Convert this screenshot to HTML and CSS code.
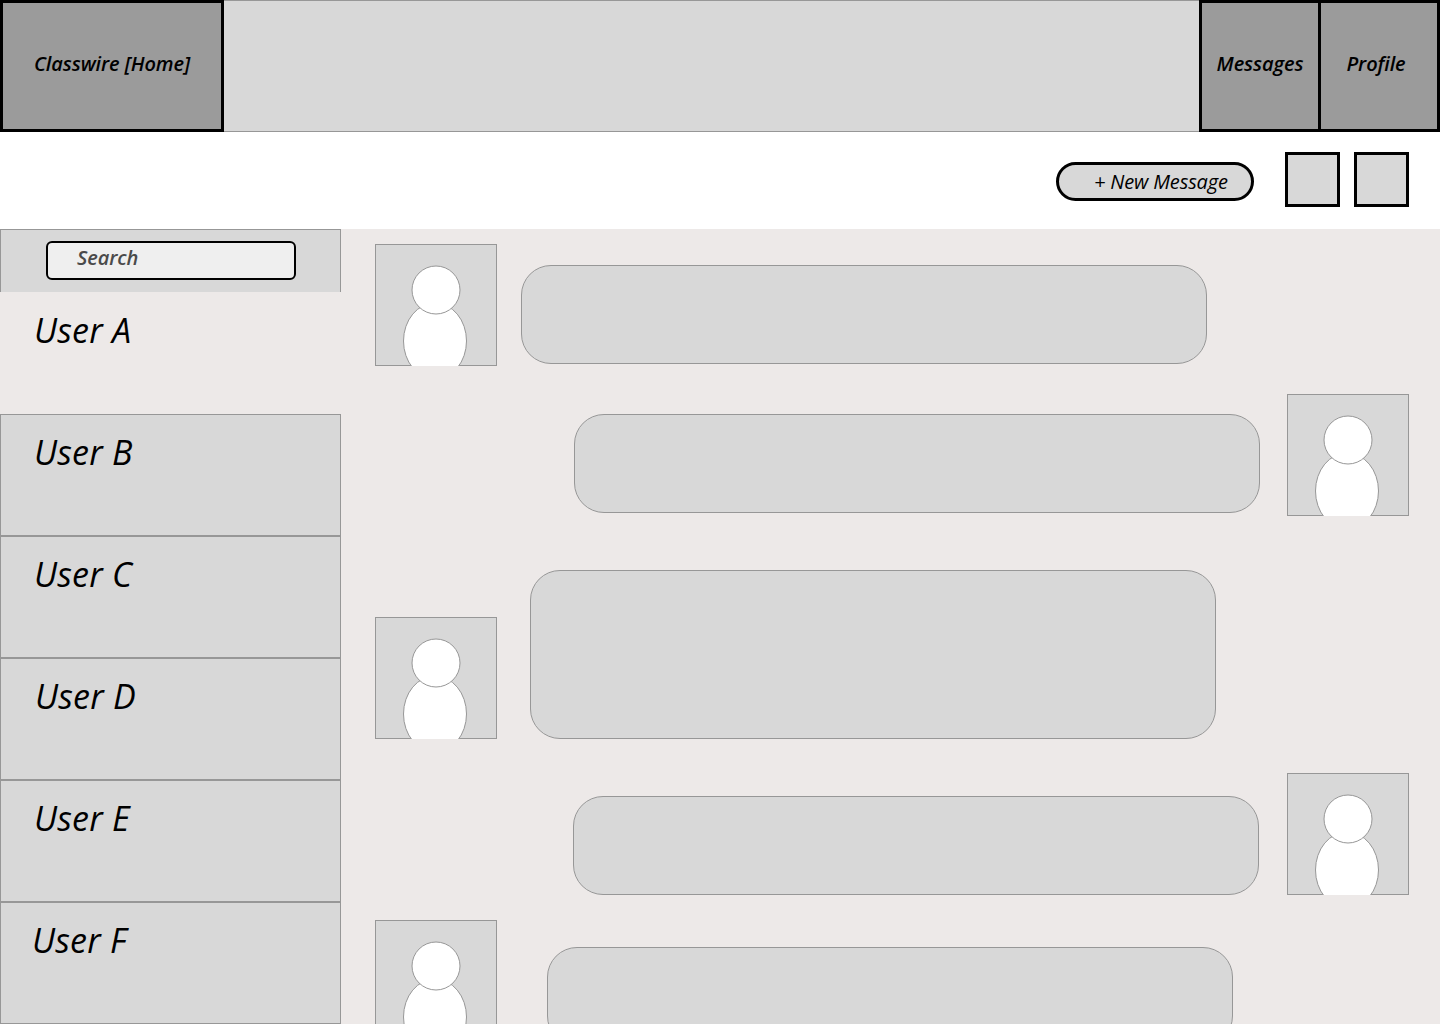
FILE: index.html
```html
<!DOCTYPE html>
<html lang="en">
<head>
<meta charset="utf-8">
<title>Classwire Messages</title>
<link rel="stylesheet" href="styles.css">
</head>
<body>
<svg class="defs" width="0" height="0" aria-hidden="true">
  <symbol id="person" viewBox="0 0 122 122">
    <ellipse cx="60" cy="97" rx="31.5" ry="38" fill="#fff" stroke="#979797"/>
    <circle cx="61" cy="46" r="24" fill="#fff" stroke="#979797"/>
  </symbol>
</svg>
<header class="topbar">
  <a class="nav-btn nav-home">Classwire [Home]</a>
  <div class="nav-spacer"></div>
  <a class="nav-btn nav-messages">Messages</a>
  <a class="nav-btn nav-profile">Profile</a>
</header>
<div class="toolbar">
  <button class="new-message">+ New Message</button>
  <div class="square"></div>
  <div class="square"></div>
</div>
<main class="content">
  <aside class="sidebar">
    <div class="search-bar"><div class="search-box">Search</div></div>
    <div class="user user-active">User A</div>
    <div class="user">User B</div>
    <div class="user">User C</div>
    <div class="user user-d">User D</div>
    <div class="user">User E</div>
    <div class="user user-f">User F</div>
  </aside>
  <section class="chat">
    <div class="msg msg-1">
      <div class="avatar"><svg><use href="#person"/></svg></div>
      <div class="bubble"></div>
    </div>
    <div class="msg msg-out msg-2">
      <div class="bubble"></div>
      <div class="avatar"><svg><use href="#person"/></svg></div>
    </div>
    <div class="msg msg-3">
      <div class="avatar"><svg><use href="#person"/></svg></div>
      <div class="bubble bubble-tall"></div>
    </div>
    <div class="msg msg-out msg-4">
      <div class="bubble"></div>
      <div class="avatar"><svg><use href="#person"/></svg></div>
    </div>
    <div class="msg msg-5">
      <div class="avatar"><svg><use href="#person"/></svg></div>
      <div class="bubble"></div>
    </div>
  </section>
</main>
</body>
</html>
```
FILE: styles.css
```css
* { box-sizing: border-box; }
html, body { margin: 0; height: 1024px; overflow: hidden; background: #fff; }
body { font-family: "Open Sans", sans-serif; font-style: italic; color: #000; }
.defs { position: absolute; }

.topbar {
  display: flex;
  height: 132px;
  background: #d8d8d8;
  border-top: 1px solid #979797;
  border-bottom: 1px solid #979797;
}
.nav-spacer { flex: 1; }
.nav-btn {
  display: flex;
  align-items: center;
  justify-content: center;
  margin: -1px 0;
  height: 132px;
  padding-bottom: 6px;
  background: #9b9b9b;
  border: 3px solid #000;
  font-size: 20px;
  font-weight: 600;
  letter-spacing: -0.1px;
}
.nav-home { width: 224px; }
.nav-messages { width: 122px; }
.nav-profile { width: 122px; margin-left: -3px; padding-right: 6px; }

.toolbar {
  display: flex;
  justify-content: flex-end;
  height: 97px;
  padding: 20px 31px 0 0;
}
.new-message {
  width: 198px;
  height: 39px;
  margin: 10px 31px 0 0;
  padding: 0 0 0 35px;
  text-align: left;
  background: #d8d8d8;
  border: 3px solid #000;
  border-radius: 20px;
  font: italic 400 20px "Open Sans", sans-serif;
  letter-spacing: -0.15px;
  color: #000;
}
.square {
  width: 55px;
  height: 55px;
  background: #d8d8d8;
  border: 3px solid #000;
}
.square + .square { margin-left: 14px; }

.content {
  display: flex;
  height: 795px;
  background: #ede9e8;
  overflow: hidden;
}
.sidebar { flex: 0 0 341px; }
.search-bar {
  height: 63px;
  padding: 11px 0 0 45px;
  background: #d8d8d8;
  border: 1px solid #979797;
  border-bottom: 0;
}
.search-box {
  width: 250px;
  height: 39px;
  padding: 0 0 6px 29px;
  display: flex;
  align-items: center;
  background: #efefef;
  border: 2px solid #000;
  border-radius: 6px;
  font-size: 20px;
  font-weight: 600;
  letter-spacing: -0.1px;
  color: #4a4a4a;
}
.user {
  height: 122px;
  padding: 14px 0 0 33px;
  background: #d8d8d8;
  border: 1px solid #979797;
  font-size: 34px;
  line-height: 46px;
  letter-spacing: 0.2px;
}
.user-active { background: none; border-color: transparent; }
.user-d { padding-left: 34px; }
.user-f { padding-left: 31px; }

.chat { flex: 1; min-width: 0; }
.msg { display: flex; align-items: flex-start; padding-left: 34px; }
.msg-out { justify-content: flex-end; padding: 0 31px 0 0; }
.avatar {
  flex: none;
  width: 122px;
  height: 122px;
  background: #d8d8d8;
  border: 1px solid #979797;
  position: relative;
}
.avatar svg {
  position: absolute;
  left: -1px;
  top: -1px;
  width: 122px;
  height: 122px;
}
.bubble {
  flex: none;
  width: 686px;
  height: 99px;
  background: #d8d8d8;
  border: 1px solid #979797;
  border-radius: 30px;
}
.bubble-tall { height: 169px; }
.msg-1 { margin-top: 15px; }
.msg-1 .bubble { margin: 21px 0 0 24px; }
.msg-2 { margin-top: 28px; }
.msg-2 .bubble { margin: 20px 27px 0 0; }
.msg-3 { margin-top: 54px; }
.msg-3 .avatar { margin-top: 47px; }
.msg-3 .bubble { margin-left: 33px; }
.msg-4 { margin-top: 34px; }
.msg-4 .bubble { margin: 23px 28px 0 0; }
.msg-5 { margin-top: 25px; }
.msg-5 .bubble { margin: 27px 0 0 50px; }
```
